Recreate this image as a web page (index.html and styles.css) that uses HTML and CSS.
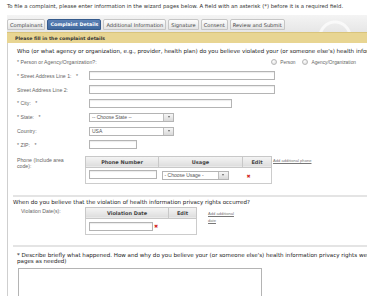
FILE: index.html
```html
<!DOCTYPE html>
<html lang="en">

<head>
    <meta charset="UTF-8">
    <meta name="viewport" content="width=device-width, initial-scale=1.0">
    <title>File a Complaint</title>
    <link rel="stylesheet" href="styles.css">
</head>

<body>
    <p class="intro">To file a complaint, please enter information in the wizard pages below. A field with an asterisk (*) before it is a required field.</p>

    <div class="wizard">
        <!-- Wizard steps -->
        <ul class="tabs">
            <li class="tab">Complainant</li>
            <li class="tab active">Complaint Details</li>
            <li class="tab">Additional Information</li>
            <li class="tab">Signature</li>
            <li class="tab">Consent</li>
            <li class="tab">Review and Submit</li>
        </ul>

        <div class="notice">Please fill in the complaint details</div>

        <div class="panel">
            <div class="section">
                <p class="question">Who (or what agency or organization, e.g., provider, health plan) do you believe violated your (or someone else's) health information privacy rights?</p>

                <div class="field field-radio">
                    <label>* Person or Agency/Organization?:</label>
                    <div class="radios">
                        <span class="radio"><i></i>Person</span>
                        <span class="radio"><i></i>Agency/Organization</span>
                    </div>
                </div>

                <div class="field">
                    <label>* Street Address Line 1: <em>*</em></label>
                    <input class="input input-long" type="text">
                </div>
                <div class="field">
                    <label>Street Address Line 2:</label>
                    <input class="input input-long" type="text">
                </div>
                <div class="field">
                    <label>* City: <em>*</em></label>
                    <input class="input input-mid" type="text">
                </div>
                <div class="field">
                    <label>* State: <em>*</em></label>
                    <div class="select select-state"><span>-- Choose State --</span><b class="arrow"></b></div>
                </div>
                <div class="field">
                    <label>Country:</label>
                    <div class="select select-state"><span>USA</span><b class="arrow"></b></div>
                </div>
                <div class="field">
                    <label>* ZIP: <em>*</em></label>
                    <input class="input input-short" type="text">
                </div>

                <div class="field field-table">
                    <label>Phone (Include area code):</label>
                    <table class="grid grid-phone">
                        <tr>
                            <th class="col-phone">Phone Number</th>
                            <th class="col-usage">Usage</th>
                            <th class="col-edit">Edit</th>
                        </tr>
                        <tr>
                            <td><input class="input input-cell" type="text"></td>
                            <td><div class="select select-usage"><span>- Choose Usage -</span><b class="arrow"></b></div></td>
                            <td><span class="remove">&#10006;</span></td>
                        </tr>
                    </table>
                    <a href="#" class="add-link">Add additional phone</a>
                </div>
            </div>

            <div class="section section-when">
                <p class="question">When do you believe that the violation of health information privacy rights occurred?</p>
                <div class="field field-table">
                    <label>Violation Date(s):</label>
                    <table class="grid grid-date">
                        <tr>
                            <th class="col-date">Violation Date</th>
                            <th class="col-edit-date">Edit</th>
                        </tr>
                        <tr>
                            <td colspan="2"><input class="input input-date" type="text"><span class="remove">&#10006;</span></td>
                        </tr>
                    </table>
                    <a href="#" class="add-link add-date">Add additional<br>date</a>
                </div>
            </div>

            <div class="section section-describe">
                <p class="question">* Describe briefly what happened. How and why do you believe your (or someone else's) health information privacy rights were violated, or the privacy rule otherwise was violated? Please be as specific as possible. (Attach additional<br>pages as needed)</p>
                <textarea class="story"></textarea>
            </div>
        </div>
    </div>
</body>

</html>
```

FILE: styles.css
```css
body {
    margin: 0;
    width: 700px;
    font-family: "DejaVu Sans", Verdana, sans-serif;
    font-size: 5.55px;
    color: #333;
    background-color: #fff;
    overflow: hidden;
}

.intro {
    margin: 0;
    padding: 2px 7px 0;
    line-height: 8px;
    height: 13px;
    font-size: 5.35px;
    color: #333;
}

.wizard {
    margin-left: 7px;
}

.tabs {
    display: flex;
    gap: 2px;
    list-style: none;
    margin: 0;
    padding: 4px 0 2px 0;
    height: 17px;
    box-sizing: border-box;
    background:
        radial-gradient(circle at 328px 22px, transparent 13px, rgba(255, 255, 255, 0.7) 14px, rgba(255, 255, 255, 0.7) 16px, transparent 17px),
        linear-gradient(#f4f4f4, #e6e6e6);
}

.tab {
    display: flex;
    align-items: center;
    height: 11px;
    padding: 0 2px;
    box-sizing: border-box;
    border: 1px solid #c6c6c6;
    border-radius: 2px 2px 0 0;
    background: linear-gradient(#fdfdfd, #e4e4e4);
    font-size: 5.1px;
    color: #444;
    white-space: nowrap;
}

.tab.active {
    background: linear-gradient(#5a80b5, #416a9f);
    border-color: #355a8c;
    color: #fff;
    font-weight: bold;
    font-size: 4.8px;
}

.notice {
    height: 11px;
    line-height: 11px;
    padding-left: 8px;
    background-color: #e8d592;
    border-top: 1px solid #d9c47c;
    font-weight: bold;
    font-size: 4.7px;
    color: #333;
    box-sizing: border-box;
}

.panel {
    border-left: 1px solid #cfcfcf;
    padding-left: 6px;
    padding-bottom: 40px;
}

.section {
    padding-left: 3px;
    padding-bottom: 10px;
}

.question {
    margin: 0;
    padding-top: 4px;
    line-height: 8px;
    color: #222;
    white-space: nowrap;
}

.field {
    display: flex;
    align-items: center;
    height: 13.8px;
}

.field label {
    width: 72px;
    flex-shrink: 0;
    font-family: "Liberation Sans", Arial, sans-serif;
    font-size: 5.2px;
    color: #666;
}

.field label em {
    font-style: normal;
    margin-left: 3px;
}

.field-radio label {
    width: auto;
    white-space: nowrap;
}

.field-radio {
    height: 14px;
}

.radios {
    display: flex;
    gap: 7px;
    margin-left: auto;
    margin-right: 4px;
    font-family: "Liberation Sans", Arial, sans-serif;
    font-size: 4.8px;
    color: #666;
}

.section:first-child .field-radio {
    width: 343px;
}

.radio {
    display: flex;
    align-items: center;
    gap: 3px;
}

.radio i {
    width: 6px;
    height: 6px;
    border: 1px solid #b8b8b8;
    border-radius: 50%;
    background: radial-gradient(circle at 40% 35%, #fff, #d8d8d8);
    box-sizing: border-box;
}

.input {
    height: 9px;
    margin: 0;
    padding: 0;
    border: 1px solid #b4b4b4;
    box-shadow: inset 0 1px 1px rgba(0, 0, 0, 0.08);
    box-sizing: border-box;
    background-color: #fff;
}

.input-long {
    width: 186px;
}

.input-mid {
    width: 143px;
}

.input-short {
    width: 48px;
}

.select {
    display: flex;
    height: 9px;
    border: 1px solid #b4b4b4;
    box-sizing: border-box;
    background-color: #fff;
    font-family: "Liberation Sans", Arial, sans-serif;
    font-size: 5px;
    color: #555;
}

.select span {
    flex: 1;
    padding-left: 2px;
    line-height: 7px;
    white-space: nowrap;
}

.select .arrow {
    width: 9px;
    border-left: 1px solid #bdbdbd;
    background: linear-gradient(#f6f6f6, #d9d9d9);
    display: flex;
    align-items: center;
    justify-content: center;
}

.select .arrow::after {
    content: "";
    border-left: 1.5px solid transparent;
    border-right: 1.5px solid transparent;
    border-top: 2px solid #666;
}

.select-state {
    width: 85px;
}

.select-usage {
    width: 67px;
}

.field-table {
    height: auto;
    align-items: flex-start;
    padding-top: 4px;
}

.field-table label {
    width: 60px;
    margin-right: 12px;
    padding-top: 1px;
    line-height: 6.5px;
}

.grid {
    margin-left: -4px;
    border-collapse: collapse;
    border: 1px solid #cccccc;
}

.grid th {
    height: 10px;
    padding: 0;
    border: 1px solid #c8c8c8;
    background: linear-gradient(#f5f5f5, #dddddd);
    font-size: 5px;
    font-weight: bold;
    color: #444;
}

.grid td {
    height: 15px;
    padding: 0 0 0 3px;
    vertical-align: middle;
}

.col-phone {
    width: 72px;
}

.col-usage {
    width: 83px;
}

.col-edit {
    width: 28px;
}

.col-date {
    width: 82px;
}

.col-edit-date {
    width: 27px;
}

.input-cell {
    width: 68px;
}

.input-date {
    width: 64px;
    vertical-align: middle;
}

.remove {
    display: inline-block;
    margin-left: 1px;
    color: #d3261c;
    font-size: 5px;
    vertical-align: middle;
}

.add-link {
    margin-left: 1px;
    margin-top: 2px;
    font-family: "Liberation Sans", Arial, sans-serif;
    font-size: 4.1px;
    color: #777;
    text-decoration: underline;
}

.add-date {
    margin-left: 11px;
    margin-top: 3px;
    line-height: 7px;
}

.section-when {
    margin-left: -1px;
    margin-top: 1px;
    padding-left: 0;
    padding-bottom: 10px;
    border-top: 2px solid #e4e4e4;
    border-bottom: 2px solid #e4e4e4;
}

.section-when .question {
    padding-top: 1px;
}

.section-when .field-table {
    padding-top: 1px;
}

.section-when .field label {
    padding-left: 8px;
    width: 56px;
    margin-right: 12px;
}

.section-describe .question {
    line-height: 6.5px;
    padding-top: 5px;
}

.story {
    display: block;
    width: 244px;
    height: 60px;
    margin: 3px 0 0 1px;
    border: 1px solid #b4b4b4;
    box-sizing: border-box;
    resize: none;
}
```
